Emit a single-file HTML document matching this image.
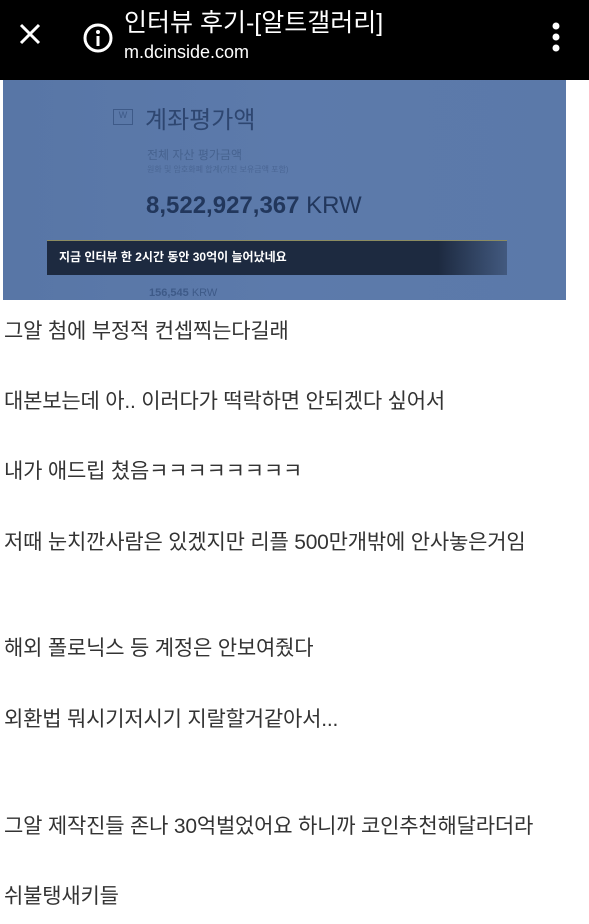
<!DOCTYPE html>
<html><head><meta charset="utf-8"><style>
body{margin:0;width:589px;height:924px;background:#fff;overflow:hidden;font-family:"Liberation Sans","Noto Sans CJK KR",sans-serif;position:relative}
.hdr{position:absolute;left:0;top:0;width:589px;height:80px;background:#000;color:#fff}
.t1{position:absolute;left:124px;top:3px;font-size:25px;white-space:nowrap}
.t2{position:absolute;left:124px;top:42px;font-size:18px}
.img{position:absolute;left:3px;top:80px;width:563px;height:220px;background:linear-gradient(90deg,#5876a6,#5c7aab 50%,#5b79a9);overflow:hidden}
.p{position:absolute;left:4px;font-size:21px;color:#333;white-space:nowrap;letter-spacing:-0.2px}
</style></head><body>
<div class="hdr">
<svg style="position:absolute;left:18px;top:22px" width="24" height="24" viewBox="0 0 24 24"><path d="M3 3L21 21M21 3L3 21" stroke="#fff" stroke-width="3"/></svg>
<svg style="position:absolute;left:82px;top:22px" width="32" height="32" viewBox="0 0 32 32"><circle cx="16" cy="16" r="13" fill="none" stroke="#fff" stroke-width="3"/><rect x="14.5" y="14" width="3" height="10" fill="#fff"/><circle cx="16" cy="10" r="2" fill="#fff"/></svg>
<div class="t1">인터뷰 후기-[알트갤러리]</div>
<div class="t2">m.dcinside.com</div>
<svg style="position:absolute;left:552px;top:22px" width="8" height="30" viewBox="0 0 8 30"><circle cx="4" cy="4" r="3.5" fill="#fff"/><circle cx="4" cy="15" r="3.5" fill="#fff"/><circle cx="4" cy="26" r="3.5" fill="#fff"/></svg>
</div>
<div class="img">
<div style="position:absolute;left:110px;top:29px;width:18px;height:14px;border:1px solid #3e5a88;font-size:9px;color:#3e5a88;text-align:center">W</div>
<div style="position:absolute;left:142px;top:20px;font-size:24px;color:#2e4670">계좌평가액</div>
<div style="position:absolute;left:144px;top:66px;font-size:12px;color:#46628f">전체 자산 평가금액</div>
<div style="position:absolute;left:144px;top:84px;font-size:8px;color:#4a6694">원화 및 암호화폐 합계(가진 보유금액 포함)</div>
<div style="position:absolute;left:143px;top:112px;font-size:24px;color:#22375c"><b>8,522,927,367</b> KRW</div>
<div style="position:absolute;left:44px;top:160px;width:460px;height:34px;background:linear-gradient(90deg,#1d2a40 85%,rgba(29,42,64,0.4));border-top:1px solid #8c8c60"></div>
<div style="position:absolute;left:56px;top:168px;font-size:12px;color:#fff;font-weight:bold">지금 인터뷰 한 2시간 동안 30억이 늘어났네요</div>
<div style="position:absolute;left:146px;top:207px;font-size:11px;color:#3e5a88"><b>156,545</b> KRW</div>
</div>
<div class="p" style="top:315px">그알 첨에 부정적 컨셉찍는다길래</div>
<div class="p" style="top:385px">대본보는데 아.. 이러다가 떡락하면 안되겠다 싶어서</div>
<div class="p" style="top:455px">내가 애드립 쳤음ㅋㅋㅋㅋㅋㅋㅋㅋ</div>
<div class="p" style="top:526px">저때 눈치깐사람은 있겠지만 리플 500만개밖에 안사놓은거임</div>
<div class="p" style="top:632px">해외 폴로닉스 등 계정은 안보여줬다</div>
<div class="p" style="top:703px">외환법 뭐시기저시기 지랄할거같아서...</div>
<div class="p" style="top:810px">그알 제작진들 존나 30억벌었어요 하니까 코인추천해달라더라</div>
<div class="p" style="top:880px">쉬불탱새키들</div>
</body></html>
